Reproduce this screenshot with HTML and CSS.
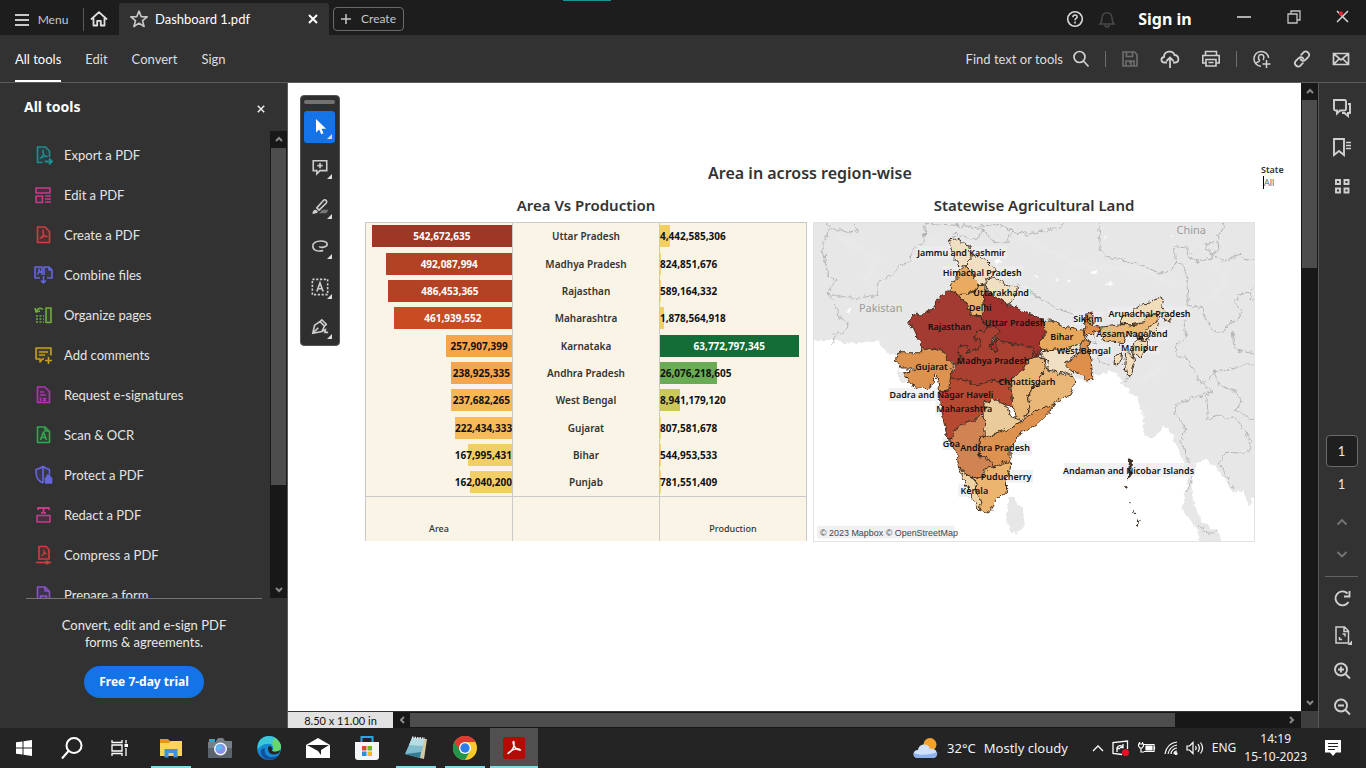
FILE: index.html
```html
<!DOCTYPE html>
<html lang="en">
<head>
<meta charset="utf-8">
<title>Dashboard 1.pdf</title>
<link rel="stylesheet" href="styles.css">
</head>
<body>
<svg class="defs" aria-hidden="true">
  <defs>
    <symbol id="i-up" viewBox="0 0 10 10"><path d="M2 7l3-3 3 3" fill="none" stroke="currentColor" stroke-width="2"/></symbol>
    <symbol id="i-down" viewBox="0 0 10 10"><path d="M2 3l3 3 3-3" fill="none" stroke="currentColor" stroke-width="2"/></symbol>
    <symbol id="i-x" viewBox="0 0 10 10"><path d="M1 1l8 8M9 1L1 9" fill="none" stroke="currentColor" stroke-width="2"/></symbol>
    <symbol id="i-page" viewBox="0 0 20 20"><path d="M4.500 2h7.500l4.500 4.500v11h-12z" stroke-linejoin="round"/></symbol>
    <symbol id="i-acro" viewBox="0 0 20 20"><path d="M7 13.500c3-2 4-5 3-8.500-1.500 3 2 6.500 4.500 6.500-2.500-.5-5 .5-7.500 2z" stroke-width="1.200"/></symbol>
  </defs>
</svg>

<header class="titlebar">
  <button class="menu"><svg width="14" height="12" viewBox="0 0 14 12"><path d="M0 1h14M0 6h14M0 11h14" stroke="currentColor" stroke-width="2"/></svg>Menu</button>
  <button class="home" aria-label="Home"><svg width="18" height="18" viewBox="0 0 18 18" fill="none" stroke="currentColor" stroke-width="1.800" stroke-linejoin="round" stroke-linecap="round"><path d="M1.500 9L9 2.200 16.500 9M3.500 8v7.500h3.700v-4.700h3.600v4.700h3.700V8"/></svg></button>
  <div class="tab">
    <svg width="20" height="20" viewBox="0 0 20 20" fill="none" stroke="#c8c8c8" stroke-width="1.600" stroke-linejoin="round"><path d="M10 2l2.200 5.600 6 .3-4.700 3.800 1.600 5.800L10 14.200l-5.100 3.300 1.600-5.800L1.800 7.900l6-.3z"/></svg>
    <span>Dashboard 1.pdf</span>
    <button aria-label="Close tab"><svg width="10" height="10"><use href="#i-x"/></svg></button>
  </div>
  <button class="create"><svg width="10" height="10" viewBox="0 0 10 10"><path d="M5 0v10M0 5h10" stroke="currentColor" stroke-width="1.500"/></svg>Create</button>
  <span class="accent"></span>
  <div class="window-tools">
    <button aria-label="Help"><svg width="18" height="18" viewBox="0 0 18 18" fill="none" stroke="#d8d8d8" stroke-width="1.600"><circle cx="9" cy="9" r="7.300"/><path d="M6.900 7.200c0-3 4.300-2.800 4.200-.3 0 1.600-2.100 1.600-2.100 3.300"/><path d="M9 11.600v1.800"/></svg></button>
    <button class="bell" aria-label="Notifications"><svg width="18" height="18" viewBox="0 0 18 18" fill="none" stroke="#4a4a4a" stroke-width="1.500"><path d="M2 14c2-2 2-3 2-6 0-7 10-7 10 0 0 3 0 4 2 6zM7 15c0 2.500 4 2.500 4 0"/></svg></button>
    <button class="signin">Sign in</button>
    <button class="min" aria-label="Minimize"><svg width="14" height="14" viewBox="0 0 14 14"><path d="M0 7h14" stroke="#e0e0e0" stroke-width="1.500"/></svg></button>
    <button class="restore" aria-label="Restore"><svg width="14" height="14" viewBox="0 0 14 14" fill="none" stroke="#c4c4c4" stroke-width="1.300"><path d="M1 4h9v9H1zM4 4V1h9v9h-3"/></svg></button>
    <button class="quit" aria-label="Close"><svg width="14" height="14" viewBox="0 0 14 14"><path d="M1 1l11 11M12 1L1 12" stroke="#d8d8d8" stroke-width="1.500"/><circle cx="5" cy="3.500" r="2.200" fill="#e0202a"/></svg></button>
  </div>
</header>

<nav class="toolbar">
  <button class="on">All tools</button><button>Edit</button><button>Convert</button><button>Sign</button>
  <div class="actions">
    <button class="find">Find text or tools<svg width="18" height="18" viewBox="0 0 18 18" fill="none" stroke="#d0d0d0" stroke-width="1.700"><circle cx="7.500" cy="7" r="5.500"/><path d="M11.500 11l5 5.500"/></svg></button>
    <i></i>
    <button aria-label="Save"><svg width="18" height="18" viewBox="0 0 18 18" fill="none" stroke="#6e6e6e" stroke-width="1.600"><path d="M2 2h11.500L16 4.500V16H2zM5.500 2v4.500h6V2M5 16v-5h8v5M8 12.500h2V16"/></svg></button>
    <button aria-label="Upload"><svg width="20" height="18" viewBox="0 0 20 18" fill="none" stroke="#d0d0d0" stroke-width="1.800"><path d="M7 12.500H4.500C.5 12.500.5 7.500 4 7c0-6.500 9-7 10.500-2 4.500 0 5.500 7.500 1 7.500H13M10 18V8M6.500 11L10 7.500l3.500 3.500"/></svg></button>
    <button aria-label="Print"><svg width="20" height="18" viewBox="0 0 20 18" fill="none" stroke="#d0d0d0" stroke-width="1.600"><path d="M4.500 5V1.500h11V5M5 13H1.800V5.500h16.400V13H15M5 9.500h10V16H5zM7.500 12.500h5"/></svg></button>
    <i></i>
    <button aria-label="Share with people"><svg width="20" height="18" viewBox="0 0 20 18" fill="none" stroke="#d0d0d0" stroke-width="1.500"><path d="M9 16.200A7.400 7.400 0 1 1 16.700 8M4 13.500c1-2 4-1.500 3.500-3-2-3-1-6 1.700-6s3.300 3 2 5.500M14.500 10v8M10.500 14h8"/></svg></button>
    <button aria-label="Copy link"><svg width="18" height="18" viewBox="0 0 18 18" fill="none" stroke="#d0d0d0" stroke-width="1.800" stroke-linecap="round"><path d="M8.200 4.800l2.600-2.600c2.600-2.400 7 1.600 4.600 4.600l-3 3c-1.600 1.400-3.600 1.200-4.700-.3M9.800 13.200l-2.600 2.600c-2.600 2.400-7-1.600-4.600-4.600l3-3c1.600-1.400 3.600-1.200 4.700.3"/></svg></button>
    <button aria-label="Email"><svg width="18" height="14" viewBox="0 0 18 14" fill="none" stroke="#d0d0d0" stroke-width="1.700"><path d="M1.500 1.500h15v11h-15zM2 2l7 6 7-6M2 12l5-5M16 12l-5-5"/></svg></button>
  </div>
</nav>

<main>
  <aside class="sidebar">
    <div class="side-head"><h2>All tools</h2><button aria-label="Close panel"><svg width="8" height="8"><use href="#i-x"/></svg></button></div>
    <div class="side-body">
      <ul>
        <li><button><svg class="c-teal" viewBox="0 0 20 20"><path d="M9.500 17.500h-5V2h8l4 4v6"/><use href="#i-acro"/><path d="M11.500 16.500h7M16 13.500l3 3-3 3" stroke-width="1.800"/></svg>Export a PDF</button></li>
        <li><button><svg class="c-pink" viewBox="0 0 20 20"><path d="M3 3h14v5H3zM3 11h6.500v6.500H3zM12 11h6M12 14h6M12 17h6"/></svg>Edit a PDF</button></li>
        <li><button><svg class="c-red" viewBox="0 0 20 20"><use href="#i-page"/><use href="#i-acro"/></svg>Create a PDF</button></li>
        <li><button><svg class="c-blue" viewBox="0 0 20 20"><path d="M7 13H2V2h7v8M11 10V2h5l3 3v8h-5M16 2v3h3M4 9c2-1 2.500-3 2-5 0 2 1.500 3.500 3 3.500M10.500 11v7M8 15.500l2.500 2.500 2.500-2.500"/></svg>Combine files</button></li>
        <li><button><svg class="c-green" viewBox="0 0 20 20"><path d="M13 3h5v14.500h-5zM3 6.500c2-4 5-4 7-2M2 3l1 4 4-1"/><path d="M3 11h8M3 14h8M3 17h8" stroke-dasharray="2 1.500" stroke-width="1.400" fill="none"/></svg>Organize pages</button></li>
        <li><button><svg class="c-yellow" viewBox="0 0 20 20"><path d="M11 14H9.500l-2.500 3v-3H3V3h15v7.500M6 7h9M6 10h6M15.500 12v7M12 15.500h7"/></svg>Add comments</button></li>
        <li><button><svg class="c-purple" viewBox="0 0 20 20"><use href="#i-page"/><path d="M7 7h4M7 10h6M7.500 12.500v4M10 13l3 3M13 13l-3 3"/></svg>Request e-signatures</button></li>
        <li><button><svg class="c-lime" viewBox="0 0 20 20"><use href="#i-page"/><path d="M7.500 15l3-8 3 8M8.500 12.500h4M12 2v4h4" fill="none"/></svg>Scan &amp; OCR</button></li>
        <li><button><svg class="c-blue" viewBox="0 0 20 20"><path d="M10 18C5 16 3 13 3 4.500 6 4 8 3 10 1.500 12 3 14 4 16.500 4.500V9M10 2v16"/><path d="M12.500 13h6v5h-6zM14 13v-1.500c0-2 3-2 3 0V13" fill="currentColor"/></svg>Protect a PDF</button></li>
        <li><button><svg class="c-pink" viewBox="0 0 20 20"><path d="M4 10.500h13v6.500H4z"/><path d="M5 5V3h11v2M10.500 3v5M8 7.800h5" fill="none" stroke-width="1.800"/></svg>Redact a PDF</button></li>
        <li><button><svg class="c-red" viewBox="0 0 20 20"><path d="M6 1.500h7l3 3V14H6z"/><path d="M8.500 11c2-1 3-3.500 2.500-6 0 2.500 1.500 4 3 4" stroke-width="1.200"/><path d="M3 17.500h15" /><circle cx="14" cy="17.500" r="1.200"/></svg>Compress a PDF</button></li>
        <li><button><svg class="c-violet" viewBox="0 0 20 20"><use href="#i-page"/><path d="M12 2v4h4M7.500 11h6v3h-6z"/></svg>Prepare a form</button></li>
      </ul>
      <div class="vbar side-bar"><svg width="10" height="10"><use href="#i-up"/></svg><b></b><svg class="end" width="10" height="10"><use href="#i-down"/></svg></div>
    </div>
    <div class="promo"><p>Convert, edit and e-sign PDF<br>forms &amp; agreements.</p><button>Free 7-day trial</button></div>
  </aside>

  <section class="doc">
    <div class="doc-row">
      <div class="page">
        <div class="quick">
          <b></b>
          <button class="sel" aria-label="Select"><svg viewBox="0 0 20 20"><path d="M6 2v13.500l3.200-3 2 4.800 2.300-1-2-4.600H16z" fill="#fff"/></svg></button>
          <button aria-label="Comment"><svg viewBox="0 0 20 20"><path d="M2.500 3h15v11H10l-3.500 3.500V14h-4zM10 5.500v6M7 8.500h6"/></svg></button>
          <button aria-label="Highlight"><svg viewBox="0 0 20 20"><path d="M9 17h8l2.500-4h-7z" fill="#777" stroke="none"/><path d="M6.500 11L14 2.500c2-1.500 4.500 1 3 3L9 13.500z"/><path d="M1.500 17.500c0-3 2-5 4-4.500l2 1.500c0 2-1 3-6 3z" fill="#ccc" stroke="none"/></svg></button>
          <button aria-label="Draw"><svg viewBox="0 0 20 20"><path d="M2 8c2-6 16-6 16-1 0 3-7 4.500-9 2.500M2.500 6.500c-2 7 4 9 11 7.500"/></svg></button>
          <button aria-label="Text"><svg viewBox="0 0 20 20"><path d="M1.500 1.500h17v17h-17z" stroke-dasharray="2.500 1.750"/><path d="M6.500 15L10 5.500 13.500 15M7.800 12h4.500"/></svg></button>
          <button aria-label="Fill and sign"><svg viewBox="0 0 20 20"><path d="M2 17l2-9 6-4 5 5-3 6zM2 17l6-6M10 4l2-2 5 5-2 2M12 15l4-2-.5 3H19"/></svg></button>
        </div>

        <div class="dash">
          <h1>Area in across region-wise</h1>
          <section class="panel">
            <h2>Area Vs Production</h2>
            <table>
              <tbody>
                <tr><td class="a"><span style="width:96%;background:#9e3826">542,672,635</span></td><th scope="row">Uttar Pradesh</th><td class="p"><span style="width:7%;background:#f2cf66">4,442,585,306</span></td></tr>
                <tr><td class="a"><span style="width:86%;background:#b24223">492,087,994</span></td><th scope="row">Madhya Pradesh</th><td class="p"><span style="width:1%;background:#f5d778">824,851,676</span></td></tr>
                <tr><td class="a"><span style="width:85%;background:#b24223">486,453,365</span></td><th scope="row">Rajasthan</th><td class="p"><span style="width:1%;background:#f5d778">589,164,332</span></td></tr>
                <tr><td class="a"><span style="width:81%;background:#c94b22">461,939,552</span></td><th scope="row">Maharashtra</th><td class="p"><span style="width:3%;background:#f2cf66">1,878,564,918</span></td></tr>
                <tr><td class="a dark"><span style="width:45%;background:#f7a54c">257,907,399</span></td><th scope="row">Karnataka</th><td class="p full"><span style="width:95%;background:#146c36">63,772,797,345</span></td></tr>
                <tr><td class="a dark"><span style="width:42%;background:#f7a54c">238,925,335</span></td><th scope="row">Andhra Pradesh</th><td class="p"><span style="width:39%;background:#6aac54">26,076,218,605</span></td></tr>
                <tr><td class="a dark"><span style="width:42%;background:#f8b757">237,682,265</span></td><th scope="row">West Bengal</th><td class="p"><span style="width:14%;background:#cbc759">8,941,179,120</span></td></tr>
                <tr><td class="a dark"><span style="width:39%;background:#f8bb5a">222,434,333</span></td><th scope="row">Gujarat</th><td class="p"><span style="width:1%;background:#f5d778">807,581,678</span></td></tr>
                <tr><td class="a dark over"><span style="width:30%;background:#f2cf66">167,995,431</span></td><th scope="row">Bihar</th><td class="p"><span style="width:1%;background:#f5d778">544,953,533</span></td></tr>
                <tr><td class="a dark over"><span style="width:29%;background:#f2cf66">162,040,200</span></td><th scope="row">Punjab</th><td class="p"><span style="width:1%;background:#f5d778">781,551,409</span></td></tr>
              </tbody>
              <tfoot><tr><td>Area</td><td></td><td>Production</td></tr></tfoot>
            </table>
          </section>
          <section class="panel">
            <h2>Statewise Agricultural Land</h2>
            <svg class="map" viewBox="813 222 442 319" role="img" aria-label="Statewise Agricultural Land">
              <defs>
                <filter id="rough" x="-5%" y="-5%" width="110%" height="110%"><feTurbulence type="fractalNoise" baseFrequency="0.07" numOctaves="2" seed="4"/><feDisplacementMap in="SourceGraphic" scale="20" xChannelSelector="R" yChannelSelector="G"/></filter>
              </defs>
              <rect x="813" y="222" width="442" height="319" fill="#fff"/>
              <g transform="translate(810 215) scale(.3333)">
                <g filter="url(#rough)">
                  <path class="land" d="M-20 0H1370V845L1332 850 1320 872 1300 828 1270 830 1250 798 1215 752 1190 735 1165 742 1152 790 1150 830 1158 882 1185 925 1230 955 1240 1000H1175L1165 950 1120 885 1125 840 1138 795 1120 745 1105 700 1078 635 1062 635 1035 668 1005 662 998 590 980 545 950 520 925 480 900 460 885 475 850 480V500H270L255 420 225 410 205 375 100 385 65 373 -20 378Z"/>
                  <path class="land" d="M594 848L612 850 638 885 645 925 628 952 604 955 588 920Z"/>
                  <path d="M850 495L800 500 730 575 640 650 600 700 600 800 545 895 510 895 440 760 410 670 386 520 360 525 270 470 258 440Z" fill="#fff"/>
                  <path class="hills" d="M560 20L700 100 830 150 990 160 1100 210M1170 80L1250 190 1200 260M1000 500L1060 450M80 60L200 130 160 200M300 150L380 60"/>
                  <path d="M840 170l20-8 6 6-16 6zM770 195l18-10-8 16zM675 178l10 4-6 6zM885 205l18-6 6 6-16 4zM700 200l10 2zM740 190l12 3-8 4zM1080 60l16 2-6 6zM880 68l10-8v8zM105 285l16-2-6 8zM552 140l14-8 14 4-20 8z" fill="#fff"/>
                </g>
                <g class="border" filter="url(#rough)">
                  <path d="M55 20L48 60 35 90 50 180 75 190 48 235 75 240 130 248 200 240 205 195 240 180 270 150 300 135 310 95 340 80 345 20M48 235L80 275 85 310 115 320 100 350 75 350 65 385M130 22L142 45 110 48 60 38M415 70L430 55 500 70 520 40 470 30 350 22M520 40L545 75 590 82 605 45 650 55 740 38 765 22M605 45L570 25 510 30M625 210L690 250"/>
                  <path d="M660 225L700 255 740 278 790 295 820 298M865 20L872 60 870 100 890 125 930 128 1000 150 1050 172 1090 165 1100 140 1120 145 1132 180 1138 290 1125 330 1130 365 1098 390 1105 425 1130 425 1175 500 1195 495 1215 470 1260 462 1300 450 1335 448M1100 140L1092 90 1130 92 1145 130 1180 140 1210 120 1230 125 1245 140 1290 115 1310 130 1335 138M1215 80L1190 88 1205 115 1230 105 1225 60 1250 20M1138 270L1175 275 1190 310 1215 350 1245 350 1260 320 1285 315 1300 290 1275 260 1290 240 1320 230 1335 260M1270 350L1275 400 1310 410 1335 415M1335 215L1315 235M1175 500L1210 530 1190 545 1195 615 1220 600 1250 610 1275 605 1290 625 1310 650 1325 690 1315 710M1210 530L1190 535 1150 550 1095 570 1100 600 1130 640 1115 680 1135 730 1150 760 1150 790 1130 830M1215 470L1230 510 1280 530 1300 560 1275 585 1310 600 1335 618M1310 715L1250 712 1230 740 1250 780 1275 825M850 350L870 440 900 450M945 500L955 480M1170 935L1200 960 1225 950"/>
                </g>
              </g>
              <g class="plates">
                <rect x="916" y="245" width="91" height="13"/><rect x="942" y="265" width="81" height="13"/><rect x="972" y="285" width="58" height="13"/><rect x="1073" y="311" width="31" height="13"/><rect x="1108" y="306" width="84" height="13"/><rect x="1095" y="327" width="74" height="13"/><rect x="1121" y="341" width="39" height="13"/><rect x="1056" y="344" width="57" height="13"/><rect x="888" y="388" width="105" height="13"/><rect x="935" y="402" width="60" height="13"/><rect x="942" y="437" width="19" height="13"/><rect x="960" y="441" width="72" height="14"/><rect x="980" y="470" width="53" height="13"/><rect x="958" y="484" width="31" height="13"/><rect x="1064" y="463" width="131" height="14"/><rect x="816" y="526" width="138" height="13"/>
              </g>
              <g class="states" transform="translate(810 215) scale(.3333)" filter="url(#rough)">
                <path fill="#f0dfc2" d="M418 68L437 66 455 76 465 88 476 90 478 105 488 118 484 128 474 138 466 150 456 150 442 140 428 124 425 105 418 90Z"/>
                <path fill="#f0dfc2" d="M488 118L500 122 525 130 545 150 555 162 548 180 530 190 527 212 510 205 497 196 480 165 466 150 478 135Z"/>
                <path fill="#e8ab60" d="M440 170L466 150 480 165 497 196 510 205 500 222 470 236 440 236 418 222 424 200 440 190Z"/>
                <path fill="#f0dfc2" d="M527 190L548 186 585 205 622 212 618 235 600 266 580 262 560 248 530 222Z"/>
                <path fill="#e8b26c" d="M440 236L470 236 500 222 510 205 525 215 520 240 524 285 515 302 480 296 470 262 450 250Z"/>
                <path fill="#a43a30" d="M405 228L418 224 440 236 450 250 470 262 480 296 515 302 520 325 535 335 495 358 492 370 512 372 508 400 470 412 475 395 448 392 445 420 456 430 440 445 408 432 405 415 392 404 360 400 338 404 325 372 312 345 308 335 292 325 300 305 320 292 328 302 370 275 385 250Z"/>
                <path fill="#a1302f" d="M524 222L560 248 600 270 650 292 690 308 700 312 710 350 690 378 692 400 685 422 670 422 668 395 640 390 600 382 555 372 562 400 555 412 543 405 545 380 565 350 558 332 535 335 520 325 515 302 524 285 520 240Z"/>
                <path fill="#aa3f31" d="M535 335L558 332 567 350 545 372 543 405 555 412 562 398 556 374 600 384 640 390 668 395 670 420 686 424 640 460 625 480 610 485 600 502 550 495 500 510 470 495 420 490 425 470 440 448 456 430 442 412 448 392 475 395 470 412 508 400 512 372 492 370 495 358Z"/>
                <path fill="#dd924f" d="M255 428L265 412 335 412 338 402 360 400 392 404 405 415 408 432 435 448 420 470 422 500 415 528 395 530 385 515 380 480 372 480 372 505 350 520 325 522 300 505 276 475 312 462 300 458 272 458Z"/>
                <path fill="#b64a33" d="M420 488L470 495 500 510 550 495 600 502 606 540 608 578 590 572 560 552 540 556 525 560 522 590 500 612 465 625 430 650 428 668 412 672 400 620 388 560 386 520 395 530 415 528Z"/>
                <path fill="#e8b778" d="M686 424L700 430 702 450 712 460 700 470 685 508 668 515 655 545 660 575 640 612 620 608 608 578 606 540 600 502 612 485 640 460 655 430Z"/>
                <path fill="#eacb9c" d="M550 552L590 572 600 600 620 608 635 618 600 640 560 655 525 668 522 640 522 590 525 562Z"/>
                <path fill="#dd924f" d="M525 668L600 640 635 618 660 600 690 578 735 565 720 590 690 620 660 642 630 655 620 672 600 700 600 740 575 745 552 755 540 735 515 725 505 700 508 665Z"/>
                <path fill="#e8b778" d="M708 460L725 470 742 468 760 478 778 475 795 495 790 520 780 540 740 560 720 575 690 578 660 600 640 612 660 575 655 545 668 515 685 508 700 470Z"/>
                <path fill="#f0dfc2" d="M692 410L720 405 760 402 810 385 820 395 810 410 780 430 765 440 775 455 795 465 790 478 778 475 760 468 740 478 742 468 710 460 715 440 700 430Z"/>
                <path fill="#e8a85c" d="M705 318L730 315 760 335 790 340 825 345 825 380 810 385 760 402 720 405 690 400 688 380 710 355Z"/>
                <path fill="#de8f4c" d="M825 368L845 380 830 392 840 400 845 450 850 492 830 494 810 475 790 470 770 455 765 440 790 430 815 410 810 390Z"/>
                <path fill="#de8f4c" d="M825 322L850 330 873 335 873 345 850 350 832 365 825 345Z"/>
                <path fill="#e0a468" d="M825 300L845 292 850 325 828 322Z"/>
                <path fill="#ecb877" d="M873 335L930 328 990 325 1005 312 1030 300 1045 295 1050 310 1030 325 1010 345 1000 365 985 372 980 352 960 352 950 362 942 385 910 380 875 375 885 362 875 350Z"/>
                <path fill="#f2ddba" d="M935 325L940 300 960 296 990 270 1030 255 1052 247 1065 258 1055 270 1068 285 1080 300 1082 320 1065 310 1045 296 1015 300 1000 322 960 328Z"/>
                <path fill="#f0d9b4" d="M1000 365L1010 345 1030 325 1050 315 1045 335 1025 355 1010 375 995 372Z"/>
                <path fill="#f0d9b4" d="M970 390L985 372 1010 375 1015 390 995 425 970 418Z"/>
                <path fill="#f2ddba" d="M948 410L970 416 975 440 965 482 952 480 946 450Z"/>
                <path fill="#f2ddba" d="M910 438L922 420 940 412 935 435 925 452Z"/>
                <path fill="#d08452" d="M522 600L525 668 508 665 505 700 515 725 540 735 552 755 530 760 520 785 495 792 470 780 445 760 440 720 425 690 412 672 428 668 430 650 465 625 500 612Z"/>
                <path fill="#efd3a4" d="M445 760L470 780 492 795 500 830 512 850 512 892 500 880 480 835 460 795Z"/>
                <path fill="#ebb56f" d="M495 792L520 785 530 760 552 755 575 745 602 740 600 765 588 790 590 830 560 850 552 868 540 888 520 895 512 892 512 850 500 830Z"/>
                <path fill="#333" d="M505 715l10-2v12l-8 2zM960 735l6-4-2 50-8 15zM948 815l5 2-4 8zM956 862l3 2zM967 888l4 2zM974 896l5 0-4 4zM983 915l6 8-4 8z"/>
              </g>
              <g class="place"><text x="1192" y="233">China</text><text x="880" y="311">Pakistan</text></g>
              <g class="names">
                <text x="961" y="255">Jammu and Kashmir</text><text x="982" y="275">Himachal Pradesh</text><text x="1001" y="295">Uttarakhand</text><text x="980" y="310">Delhi</text><text x="1015" y="325">Uttar Pradesh</text><text x="949" y="330">Rajasthan</text><text x="1088" y="321">Sikkim</text><text x="1150" y="316">Arunachal Pradesh</text><text x="1062" y="340">Bihar</text><text x="1111" y="337">Assam</text><text x="1147" y="337">Nagaland</text><text x="1140" y="351">Manipur</text><text x="1084" y="354">West Bengal</text><text x="993" y="364">Madhya Pradesh</text><text x="931" y="370">Gujarat</text><text x="1027" y="385">Chhattisgarh</text><text x="941" y="398">Dadra and Nagar Haveli</text><text x="964" y="412">Maharashtra</text><text x="951" y="447">Goa</text><text x="995" y="451">Andhra Pradesh</text><text x="1006" y="480">Puducherry</text><text x="974" y="494">Kerala</text><text x="1129" y="474">Andaman and Nicobar Islands</text>
              </g>
              <text class="credit" x="819" y="536">© 2023 Mapbox © OpenStreetMap</text>
            </svg>
          </section>
          <div class="filter"><label for="state">State</label><input id="state" value="All"></div>
        </div>
      </div>
      <div class="vbar doc-bar"><svg width="10" height="10"><use href="#i-up"/></svg><b></b><svg class="end" width="10" height="10"><use href="#i-down"/></svg></div>
    </div>
    <div class="hrow"><span class="size">8.50 x 11.00 in</span><div class="hbar"><svg class="left" width="10" height="10"><use href="#i-up"/></svg><b></b><svg class="right" width="10" height="10"><use href="#i-up"/></svg></div><span class="corner"></span></div>
  </section>

  <aside class="rail">
    <button aria-label="Comments"><svg viewBox="0 0 20 20"><path d="M2 2h10.500c1 0 1.500.5 1.500 1.500V11c0 1-.5 1.500-1.500 1.500H8L5 15.500v-3H3.500C2 12.500 2 12 2 11zM16 6h2v9h-2v3l-3.500-3H10"/></svg></button>
    <button aria-label="Bookmarks"><svg viewBox="0 0 20 20"><path d="M2 2h10v16l-5-4-5 4z"/><path d="M14 5.500h5M14 8.500h5M14 11.500h5" stroke-width="1.500"/></svg></button>
    <button aria-label="Thumbnails"><svg viewBox="0 0 20 20"><path d="M4 4h4v4H4zM12.500 4h4v4h-4zM4 12.500h4v4H4zM12.500 12.500h4v4h-4z"/></svg></button>
    <input aria-label="Page number" value="1">
    <span class="total">1</span>
    <button class="dim" aria-label="Previous page"><svg viewBox="0 0 20 20"><path d="M5.500 12.500L10 8l4.500 4.500"/></svg></button>
    <button class="dim" aria-label="Next page"><svg viewBox="0 0 20 20"><path d="M5.500 8l4.500 4.500L14.500 8"/></svg></button>
    <hr>
    <button class="low" aria-label="Rotate"><svg viewBox="0 0 20 20"><path d="M16.500 13a7 7 0 1 1-1-8.500M17.500 2v5.500H12"/></svg></button>
    <button class="low" aria-label="Fit page"><svg viewBox="0 0 20 20"><path d="M4 2h8.500L16.500 6v12H4zM12 2v4.500h4.500M10.500 9H13v2.500M10 14.500H7.500V12" stroke-width="1.500"/><path d="M20 15.500V20h-4.500z" fill="#d0d0d0" stroke="none"/></svg></button>
    <button class="low" aria-label="Zoom in"><svg viewBox="0 0 20 20"><circle cx="9" cy="8.500" r="6"/><path d="M13.500 13l4.500 4.500M9 5.500v6M6 8.500h6"/></svg></button>
    <button class="low" aria-label="Zoom out"><svg viewBox="0 0 20 20"><circle cx="9" cy="8.500" r="6"/><path d="M13.500 13l4.500 4.500M6 8.500h6"/></svg></button>
  </aside>
</main>

<footer class="taskbar">
  <button aria-label="Start"><svg width="16" height="16" viewBox="0 0 16 16"><path d="M0 2.300L6.500 1.400v6.100H0zM7.500 1.200L16 0v7.500H7.500zM0 8.500h6.500v6.100L0 13.700zM7.500 8.500H16V16l-8.500-1.200z" fill="#fff"/></svg></button>
  <button aria-label="Search"><svg width="24" height="24" viewBox="0 0 24 24" fill="none" stroke="#fff" stroke-width="2"><circle cx="14" cy="9.500" r="7.500"/><path d="M8.500 15L2 22.500"/></svg></button>
  <button aria-label="Task view"><svg width="18" height="16" viewBox="0 0 18 16" fill="none" stroke="#fff" stroke-width="1.300"><path d="M1 0v2.500h10V0M1 5h10v6H1zM1 16v-2.500h10V16M15 0v3.500M15 8v8"/><path d="M13.500 4h3.500v3h-3.500z" fill="#fff" stroke="none"/></svg></button>
  <div class="apps">
    <button class="run" aria-label="File Explorer"><svg width="22" height="20" viewBox="0 0 22 20"><path d="M0 1h8l2 2h12v5H0z" fill="#e09a1b"/><path d="M0 5h9l2-2h11v15H0z" fill="#fcd35d"/><path d="M4.500 11h13v8.500h-4V15h-5v4.500h-4z" fill="#3f94d8"/></svg></button>
    <button aria-label="Camera"><svg width="24" height="22" viewBox="0 0 24 22"><rect x="1" y="2" width="6" height="5" fill="#2ba7dd"/><path d="M8 4l2-3h5l2 3h7v17H0V5h8z" fill="#77808a"/><path d="M0 11h24v10H0z" fill="#5b636c"/><circle cx="12.500" cy="12" r="6.500" fill="#f0f2f6"/><circle cx="12.500" cy="12" r="5" fill="#8c8ee8"/><circle cx="11" cy="10.500" r="3" fill="#5ab9ee"/></svg></button>
    <button aria-label="Edge"><svg width="24" height="24" viewBox="0 0 24 24"><circle cx="12" cy="12" r="12" fill="#1689d4"/><path d="M1 9C3-2 20-4 24 10c.5 5-4 7-9 5 3-5-1-8-5-7-4 0-7 2-9 5z" fill="#3ac7d8"/><path d="M17 2c5 2 7 6 7 9 0 4-4 6-9 4 2-2 2-5 0-7z" fill="#67d66c"/><path d="M8 12c-2 8 5 12 14 7-5 8-16 5-18-1-1-4 1-6 4-6z" fill="#124f9c"/><path d="M12 10c-2 2-1 6 2 8 3 1 6 0 8-1l1-3c-3 2-6 2-8 1 1-2 0-5-3-5z" fill="#252525"/></svg></button>
    <button aria-label="Mail"><svg width="24" height="20" viewBox="0 0 24 20"><path d="M0 7l12-7 12 7v13H0z" fill="#fff"/><path d="M1 7h22l-8 5v5l-3-4z" fill="#202020"/></svg></button>
    <button aria-label="Microsoft Store"><svg width="24" height="24" viewBox="0 0 24 24"><path d="M6.500 7V1h11v6" fill="none" stroke="#2ba7dd" stroke-width="2"/><path d="M0 6h24v15q0 3-3 3H3q-3 0-3-3z" fill="#f4f6f8"/><path d="M7 10h4.500v4.500H7z" fill="#e8492c"/><path d="M12.500 10H17v4.500h-4.500z" fill="#70b52b"/><path d="M7 15.500h4.500V20H7z" fill="#2590df"/><path d="M12.500 15.500H17V20h-4.500z" fill="#f8b91b"/></svg></button>
    <button class="run" aria-label="Notepad"><svg width="22" height="24" viewBox="0 0 22 24"><path d="M7 3l15 0-3 20-4-1z" fill="#d8c8a0"/><path d="M7 2l13 1-5 19L0 18z" fill="#80bccb"/><path d="M7 2l13 1-2 7-14-1z" fill="#b8dce3"/><path d="M0 18l15 4 1-6z" fill="#367f94"/><path d="M7 1.500l13 1" stroke="#e5eef0" stroke-width="2" stroke-dasharray="1.500 1"/></svg></button>
    <button class="run" aria-label="Chrome"><svg width="24" height="24" viewBox="0 0 24 24"><circle cx="12" cy="12" r="12" fill="#fbc926"/><path d="M1.500 6A12 12 0 0 0 12 24l5-9-5-3z" fill="#23954a"/><path d="M1.500 6A12 12 0 0 1 22.500 6H12l-5 9z" fill="#dc3c30"/><circle cx="12" cy="12" r="6" fill="#fff"/><circle cx="12" cy="12" r="4.700" fill="#2d7de9"/></svg></button>
    <button class="run cur" aria-label="Acrobat"><svg width="22" height="22" viewBox="0 0 22 22"><rect width="22" height="22" rx="3" fill="#b30b00"/><path d="M5 16.500c4-2 7-7 5.800-12-2.300 0 1 9 6.700 8.500-2-2.500-9-1-12.500 3.500z" fill="none" stroke="#fff" stroke-width="1.400" stroke-linejoin="round"/></svg></button>
  </div>
  <div class="tray">
    <button class="weather"><svg width="26" height="22" viewBox="0 0 26 22"><circle cx="17" cy="7.500" r="6.500" fill="#f5a22a"/><path d="M5 21c-6 0-6-8 0-8 1-7 11-7 12-1 8-2 9 9 3 9z" fill="#cfe0fb"/><path d="M5 21c-4 0-5-3-4-5 6 3 17 2 23-1 1 3-1 6-4 6z" fill="#8eb2ee"/></svg><span>32°C</span><span>Mostly cloudy</span></button>
    <svg width="12" height="8" viewBox="0 0 12 8"><path d="M1 7l5-5 5 5" fill="none" stroke="#fff" stroke-width="1.300"/></svg>
    <svg width="18" height="16" viewBox="0 0 18 16" fill="none" stroke="#fff" stroke-width="1.300"><path d="M15.500 9V1L1 2.500v11l9 1M5 8c1-3 5-3 6-.5M11 4v3.500H8M5 12V8.500h3"/><circle cx="13.500" cy="12.500" r="3.500" fill="#e81123" stroke="none"/></svg>
    <svg width="18" height="14" viewBox="0 0 18 14" fill="none" stroke="#fff" stroke-width="1.200"><path d="M5 3.500h11v7H6M16.500 5.500v3M1.500 1v2M4.500 1v2M.5 3h5v2l-1.500 2h-2L.5 5zM3 7v4h3"/><path d="M8 5h6v4H8z" fill="#fff"/></svg>
    <svg width="14" height="14" viewBox="0 0 14 14" fill="none" stroke="#fff" stroke-width="1.200"><path d="M1 13C2 6 6 2 13 1M4 13c1-5 4-8 9-9M7 13c0-3 3-6 6-6M10 13c0-2 1-3 3-3"/><circle cx="12" cy="12.500" r="1" fill="#fff"/></svg>
    <svg width="18" height="14" viewBox="0 0 18 14" fill="none" stroke="#fff" stroke-width="1.200"><path d="M1 5h2.500L7 1.500v11L3.500 9H1zM9.500 5c1 1.500 1 2.500 0 4M12 3c2 3 2 5 0 8M14.500 1.500c3 4 3 7 0 11"/></svg>
    <span class="lang">ENG</span>
    <time>14:19<br>15-10-2023</time>
    <svg class="note" width="16" height="16" viewBox="0 0 16 16"><path d="M0 0h16v12.500h-5L8 16l-3-3.500H0z" fill="#fff"/><path d="M3 3.500h10M3 6.500h10M3 9.500h7" stroke="#222" stroke-width="1.200"/></svg>
  </div>
</footer>
</body>
</html>
```
FILE: styles.css
```css
* { box-sizing: border-box; }
body { margin: 0; height: 100vh; display: flex; flex-direction: column; overflow: hidden; background: #323232; color: #e8e8e8; font: 13px/20px Lato, "Noto Sans", sans-serif; }
button { border: 0; margin: 0; padding: 0; background: none; color: inherit; font: inherit; display: flex; align-items: center; justify-content: center; }
h1, h2, p, ul { margin: 0; padding: 0; }
svg { flex: none; display: block; }
.defs { position: absolute; width: 0; height: 0; }

.titlebar { position: relative; display: flex; height: 35px; flex: none; background: #1d1d1d; align-items: center; }
.menu { gap: 9px; padding: 4px 16px 0; width: 83px; font-size: 12px; color: #c8c8c8; }
.home { width: 36px; height: 23px; border-left: 1px solid #5a5a5a; margin-top: 3px; padding-right: 6px; color: #e0e0e0; }
.tab { align-self: flex-end; width: 210px; height: 32px; border-radius: 3px 3px 0 0; background: #323232; display: flex; align-items: center; gap: 6px; padding: 0 11px 0 10px; color: #fff; }
.tab span { flex: 1; white-space: nowrap; }
.create { margin: 3px 0 0 4px; width: 71px; height: 24px; gap: 10px; border: 1px solid #6a6a6a; border-radius: 4px; font-size: 12px; color: #c8c8c8; }
.accent { position: absolute; left: 563px; top: 0; width: 48px; height: 1px; background: #1c8f9c; }
.window-tools { margin-left: auto; display: flex; align-items: center; padding-right: 16px; height: 35px; padding-top: 2px; }
.bell { margin-left: 14px; }
.signin { margin: 0 45px 0 22px; font: 700 16px/20px "Noto Sans", sans-serif; color: #fff; white-space: nowrap; width: 54px; }
.min { margin-right: 36px; padding-bottom: 4px; }
.restore { margin-right: 35px; padding-bottom: 4px; }
.quit { padding-bottom: 4px; }

.toolbar { height: 48px; flex: none; display: flex; padding-left: 15px; gap: 24px; border-bottom: 1px solid #5c5c5c; color: #dedede; }
.toolbar > button { height: 47px; white-space: nowrap; }
.toolbar > .on { color: #fff; border-bottom: 2px solid #fff; border-top: 2px solid transparent; }
.actions { margin-left: auto; display: flex; align-items: center; padding-right: 16px; gap: 21px; }
.actions i { width: 1px; height: 16px; background: #6e6e6e; margin: 0 -6px; }
.find { gap: 9px; white-space: nowrap; }

main { flex: 1; min-height: 0; display: flex; }
.sidebar { width: 288px; flex: none; display: flex; flex-direction: column; border-right: 1px solid #5a5a5a; }
.side-head { height: 48px; flex: none; display: flex; justify-content: space-between; align-items: center; padding: 0 22px 0 24px; }
.side-head h2 { font: 700 14px/20px "Noto Sans", sans-serif; color: #fff; }
.side-head button { padding-top: 4px; }
.side-body { flex: 1; min-height: 0; display: flex; overflow: hidden; }
.side-body ul { flex: 1; list-style: none; padding: 4px 0 0 33px; }
.side-body li { height: 40px; }
.side-body li button { height: 40px; gap: 11px; color: #e4e4e4; white-space: nowrap; }
.side-body li svg { width: 20px; height: 20px; fill: color-mix(in srgb, currentColor 12%, transparent); stroke: currentColor; stroke-width: 1.6px; stroke-linejoin: round; }
.c-teal { color: #1d8f92; } .c-pink { color: #c83a8a; } .c-red { color: #d23c40; } .c-blue { color: #6565df; } .c-green { color: #6fae3c; }
.c-yellow { color: #c7a11e; } .c-purple { color: #ae35b5; } .c-lime { color: #35a650; } .c-violet { color: #8a52cc; }
.vbar { width: 17px; background: #181818; display: flex; flex-direction: column; align-items: center; color: #8a8a8a; border-left: 1px solid #181818; border-right: 1px solid #181818; padding: 3px 0; }
.vbar b { width: 15px; background: #4d4d4d; margin-top: 4px; }
.vbar .end { margin-top: auto; }
.side-bar b { height: 73%; }
.promo { height: 130px; flex: none; margin: 0 25px 0 26px; border-top: 1px solid #757575; padding: 18px 0 0; text-align: center; }
.promo p { line-height: 17px; white-space: nowrap; }
.promo button { margin: 15px auto 0; width: 120px; height: 32px; border-radius: 16px; background: #1473e6; color: #fff; font: 700 12px/20px "Noto Sans", sans-serif; white-space: nowrap; }

.doc { flex: 1; min-width: 0; display: flex; flex-direction: column; }
.doc-row { flex: 1; min-height: 0; display: flex; }
.page { position: relative; flex: 1; min-width: 0; background: #fff; overflow: hidden; }
.doc-bar b { height: 27%; }
.doc-bar { width: 17px; }
.hrow { height: 17px; flex: none; display: flex; }
.size { width: 105px; background: #e1e1e1; color: #111; font-size: 11px; line-height: 17px; text-align: center; border-top: 1px solid #333; }
.hbar { flex: 1; display: flex; align-items: center; background: #181818; color: #8a8a8a; padding: 0 4px; border-top: 1px solid #333; }
.hbar b { width: 85%; height: 14px; margin-left: 3px; background: #4d4d4d; }
.hbar .left { transform: rotate(-90deg); }
.hbar .right { transform: rotate(90deg); margin-left: auto; }
.corner { width: 17px; background: #3e3e3e; }

.quick { position: absolute; left: 12px; top: 12px; width: 40px; padding: 4px 4px 2px 3px; border-radius: 4px; border: 1px solid #555; background: #2f2f2f; display: flex; flex-direction: column; gap: 8px; }
.quick b { height: 4px; border-radius: 2px; background: #727272; margin-bottom: -1px; }
.quick button { position: relative; height: 32px; border-radius: 3px; }
.quick .sel { background: #1473e6; }
.quick svg { width: 18px; height: 18px; fill: none; stroke: #ccc; stroke-width: 1.8px; }
.quick .sel svg { stroke: none; width: 20px; height: 20px; }
.quick button::after { content: ""; position: absolute; right: 3px; bottom: 4px; width: 0; height: 0; border-style: solid; border-width: 0 0 5px 5px; border-color: transparent transparent #ddd transparent; }

.dash { display: grid; grid-template-columns: minmax(0, 442fr) minmax(0, 442fr) 40px; column-gap: 6px; padding: 78px 0 0 77px; font-family: "Noto Sans", sans-serif; color: #333; }
.dash h1, .dash h2 { text-align: center; font-size: 15px; line-height: 24px; font-weight: 600; color: #333; }
.dash h1 { grid-column: 1 / 3; padding-bottom: 6px; font-size: 16px; }
.panel h2 { height: 31px; line-height: 28px; }
.filter { grid-column: 3; grid-row: 1 / 3; padding: 3px 0 0; font-size: 9px; line-height: 12px; }
.filter label { display: block; font-weight: 600; }
.filter input { width: 36px; height: 13px; margin-left: 2px; padding: 0; border: 0; border-left: 1px solid #000; font: 9px/12px "Noto Sans", sans-serif; color: #666; background: none; outline: 0; }
table { width: 100%; height: 319px; table-layout: fixed; border-collapse: collapse; background: #faf4e6; border: 1px solid #c9c9c9; border-bottom: 0; font-size: 10px; line-height: 12px; }
tbody tr { height: 27px; }
table td, table th { padding: 0; border-right: 1px solid #c9c9c9; }
table th { font-weight: 600; color: #333; }
td.a, td.p { font-weight: 700; color: #111; }
td.a { color: #fff; }
td.a.dark { color: #111; }
td span { display: flex; height: 22px; align-items: center; white-space: nowrap; }
td.a span { justify-content: center; margin-left: auto; }
td.a.over span { justify-content: flex-end; }
td.p.full span { justify-content: center; color: #fff; }
tfoot td { height: 45px; border-top: 1px solid #c9c9c9; text-align: center; vertical-align: bottom; padding-bottom: 6px; font-size: 9px; color: #333; font-weight: 500; }

.map { width: 100%; height: auto; border: 1px solid #e2e2e2; }
.land { fill: #e7e7e7; }
.hills { fill: none; stroke: #efefef; stroke-width: 18px; opacity: .25; }
.border { fill: none; stroke: #a9a9a9; stroke-width: 2.5px; }
.plates { fill: #eeeef1; fill-opacity: .8; }
.states { stroke: #3c2c1e; stroke-width: 3px; stroke-linejoin: round; }
.names { font: 600 9px "Noto Sans", sans-serif; fill: #111; text-anchor: middle; }
.place { font: 11px "Noto Sans", sans-serif; fill: #9b9b9b; text-anchor: middle; }
.credit { font: 9px "Liberation Sans", Arial, sans-serif; fill: #444; }

.rail { width: 48px; flex: none; border-left: 1px solid #5a5a5a; display: flex; flex-direction: column; align-items: center; padding: 5px 2px 3px 0; }
.rail button { width: 40px; height: 39px; flex: none; }
.rail svg { width: 20px; height: 20px; fill: none; stroke: #d0d0d0; stroke-width: 1.9px; }
.rail input { margin-top: auto; width: 32px; height: 32px; border: 1px solid #6a6a6a; border-radius: 4px; background: #1f1f1f; color: #e8e8e8; text-align: center; font: inherit; padding: 0; }
.total { height: 34px; line-height: 34px; margin-bottom: 5px; }
.rail .dim { height: 32px; }
.rail .dim svg { stroke: #757575; }
.rail hr { width: 33px; border: 0; height: 1px; background: #626262; margin: 6px 0 4px; }
.rail .low { height: 36px; }

.taskbar { height: 40px; flex: none; display: flex; background: #242424; color: #f2f2f2; font-family: "Noto Sans", sans-serif; }
.taskbar button { height: 40px; }
.taskbar > button { width: 48px; }
.apps { display: flex; gap: 1px; margin-left: 3px; }
.apps button { position: relative; width: 48px; }
.run::after { content: ""; position: absolute; bottom: 0; left: 4px; right: 4px; height: 2px; background: #7fdce8; }
.cur { background: #505050; }
.cur::after { left: 0; right: 0; }
.tray { margin-left: auto; display: flex; align-items: center; gap: 8px; padding-right: 25px; }
.tray .weather { gap: 8px; margin-right: 16px; white-space: nowrap; }
.lang { font-size: 12px; }
.tray time { font-size: 12px; line-height: 18px; text-align: center; white-space: nowrap; }
.note { margin-left: 10px; }
```
